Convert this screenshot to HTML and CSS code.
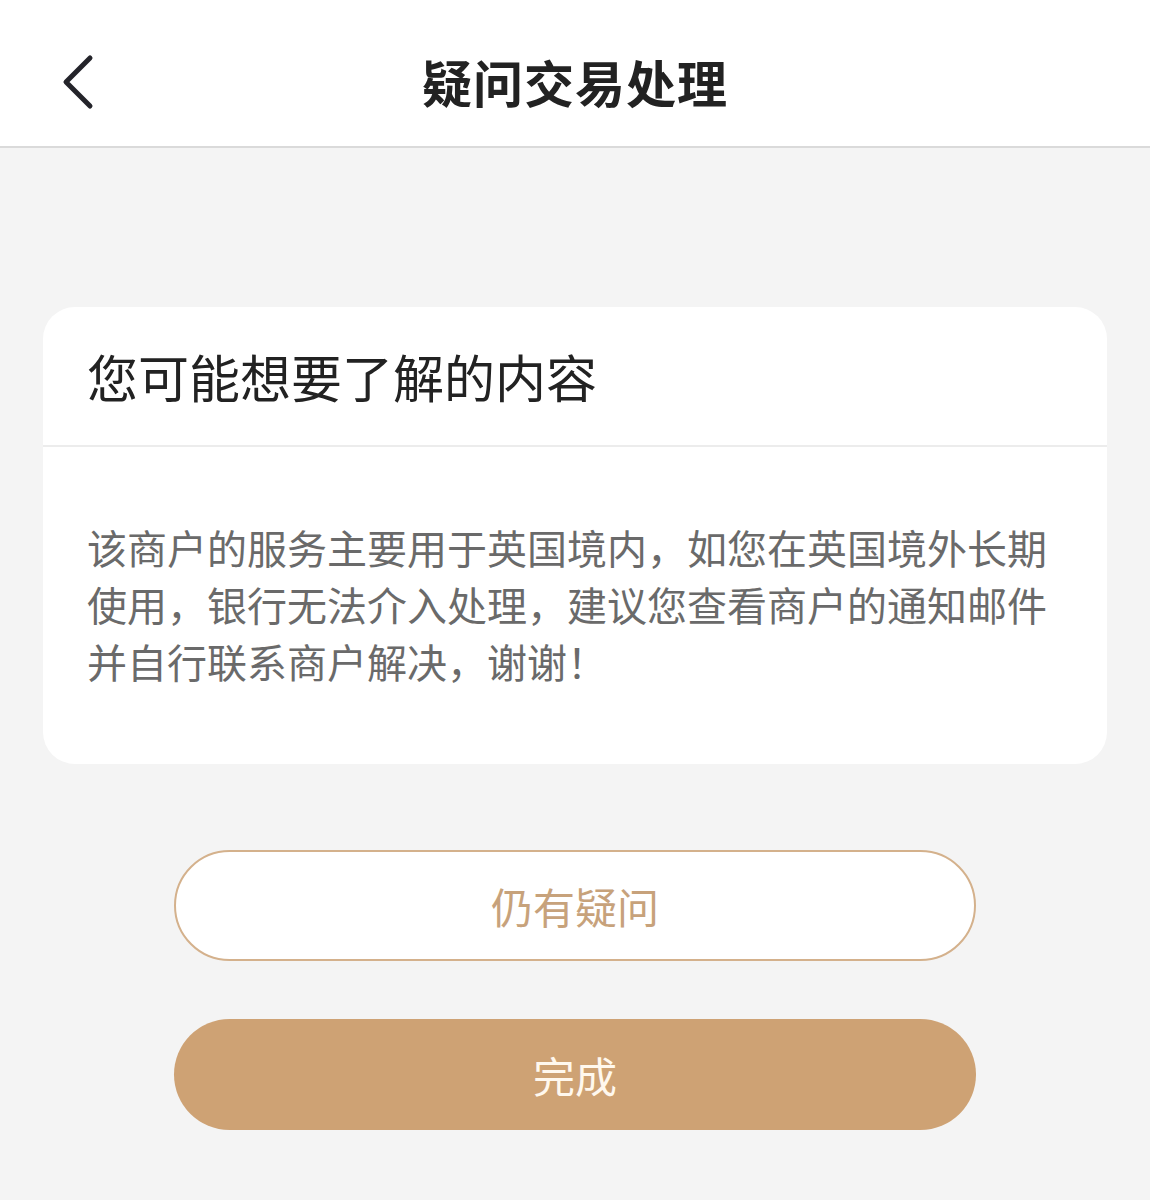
FILE: index.html
```html
<!DOCTYPE html>
<html lang="zh-CN">

<head>
  <meta charset="UTF-8" />
  <title>疑问交易处理</title>
  <link rel="stylesheet" href="styles.css">
</head>

<body>
  <header class="topbar">
    <a class="back" href="#" aria-label="返回">
      <svg width="36" height="56" viewBox="0 0 36 56">
        <path d="M30 4 L6 28 L30 52" fill="none" stroke="#24242a" stroke-width="5" stroke-linecap="round" stroke-linejoin="round" />
      </svg>
    </a>
    <h1>疑问交易处理</h1>
  </header>

  <main class="content">
    <section class="card">
      <div class="card-title">您可能想要了解的内容</div>
      <p class="card-body">该商户的服务主要用于英国境内，如您在英国境外长期使用，银行无法介入处理，建议您查看商户的通知邮件并自行联系商户解决，谢谢！</p>
    </section>

    <div class="actions">
      <button class="btn btn-outline">仍有疑问</button>
      <button class="btn btn-fill">完成</button>
    </div>
  </main>
</body>

</html>
```

FILE: styles.css
```css
body {
  margin: 0;
  font-family: "Noto Sans CJK SC", "Noto Sans", sans-serif;
  background: #f4f4f4;
  min-height: 1200px;
}

.topbar {
  position: relative;
  height: 146px;
  background: #fff;
  border-bottom: 2px solid #dadada;
  display: flex;
  align-items: center;
  justify-content: center;
}

.back {
  position: absolute;
  left: 60px;
  top: 54px;
  display: block;
  line-height: 0;
}

.topbar h1 {
  margin: 0;
  font-size: 50px;
  font-weight: 700;
  color: #222;
  letter-spacing: 1px;
  padding-top: 16px;
}

.content {
  padding: 159px 43px 0;
}

.card {
  background: #fff;
  border-radius: 32px;
  overflow: hidden;
}

.card-title {
  height: 140px;
  box-sizing: border-box;
  padding: 0 44px;
  display: flex;
  align-items: center;
  font-size: 51px;
  color: #222;
  border-bottom: 2px solid #ececec;
}

.card-body {
  margin: 0;
  padding: 72px 44px 74px;
  font-size: 40px;
  line-height: 57px;
  color: #6a6a6a;
}

.actions {
  display: flex;
  flex-direction: column;
  align-items: center;
  gap: 58px;
  margin-top: 86px;
}

.btn {
  width: 802px;
  height: 111px;
  border-radius: 56px;
  font-family: inherit;
  font-size: 42px;
  cursor: pointer;
}

.btn-outline {
  background: #fff;
  border: 2px solid #d4b18c;
  color: #c7a27b;
}

.btn-fill {
  background: #cea274;
  border: none;
  color: #fff8ee;
}
```
